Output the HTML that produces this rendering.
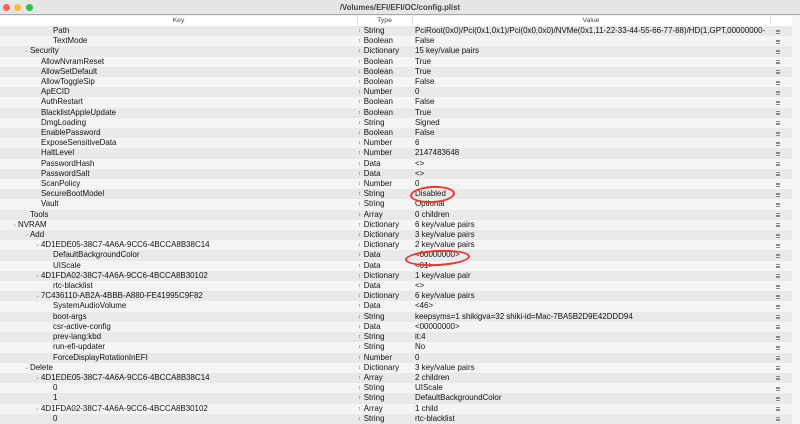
<!DOCTYPE html>
<html><head><style>
*{margin:0;padding:0;box-sizing:border-box}
body{width:800px;height:424px;overflow:hidden;background:#f0f0f0;font-family:"Liberation Sans",sans-serif;font-size:7.95px;color:#111;position:relative}
.tb{position:absolute;left:0;top:0;width:800px;height:15px;background:#e6e6e6;border-bottom:1px solid #a8a8a8}
.tb .t{position:absolute;left:0;width:800px;top:3px;text-align:center;font-weight:bold;color:#444;font-size:7.8px}
.d{position:absolute;top:3.5px;width:7px;height:7px;border-radius:50%}
.hd{position:absolute;top:16px;left:0;width:792px;height:10px;background:#fff;color:#444;font-size:6.8px}
.hd span{position:absolute;top:1px;text-align:center}
.hd i{position:absolute;top:1px;width:1px;height:8px;background:#ddd}
.rows{position:absolute;top:26px;left:0;width:792px}
.r{height:10.21px;position:relative;line-height:10.2px;white-space:nowrap}
.r:nth-child(odd){background:#e9e9e9}
.r:nth-child(even){background:#f4f4f4}
.k{position:absolute;top:0}
.ty{position:absolute;left:358px;top:0}
.ty:before{content:"\2195";font-size:5.5px;color:#666;margin-right:3px;vertical-align:1px}
.v{position:absolute;left:415px;top:0}
.m{position:absolute;left:776px;top:3.5px;width:4px;height:4px;border-top:1px solid #888;border-bottom:1px solid #888}
.m:after{content:"";position:absolute;left:0;top:0.5px;width:4px;height:1px;background:#888}
.a{position:absolute;top:0;color:#999;font-size:6px}
.sb{position:absolute;left:792px;top:16px;width:8px;height:408px;background:#f7f7f7}
.th{position:absolute;left:795px;top:294px;width:3px;height:24px;border-radius:2px;background:#c2c2c2}
.ov{position:absolute;border:2px solid #e8382a;border-radius:50%}
</style></head><body>
<div class="tb"><div class="d" style="left:3px;background:#fe5f57"></div><div class="d" style="left:14px;background:#febc2e"></div><div class="d" style="left:26px;background:#28c840"></div><div class="t">/Volumes/EFI/EFI/OC/config.plist</div></div>
<div class="hd"><span style="left:0;width:357px">Key</span><i style="left:357px"></i><span style="left:357px;width:55px">Type</span><i style="left:412px"></i><span style="left:412px;width:358px">Value</span><i style="left:770px"></i></div>
<div class="rows">
<div class="r"><span class="k" style="left:53px">Path</span><span class="ty">String</span><span class="v">PciRoot(0x0)/Pci(0x1,0x1)/Pci(0x0,0x0)/NVMe(0x1,11-22-33-44-55-66-77-88)/HD(1,GPT,00000000-</span><i class="m"></i></div>
<div class="r"><span class="k" style="left:53px">TextMode</span><span class="ty">Boolean</span><span class="v">False</span><i class="m"></i></div>
<div class="r"><span class="a" style="left:24px">&#8964;</span><span class="k" style="left:30px">Security</span><span class="ty">Dictionary</span><span class="v">15 key/value pairs</span><i class="m"></i></div>
<div class="r"><span class="k" style="left:41px">AllowNvramReset</span><span class="ty">Boolean</span><span class="v">True</span><i class="m"></i></div>
<div class="r"><span class="k" style="left:41px">AllowSetDefault</span><span class="ty">Boolean</span><span class="v">True</span><i class="m"></i></div>
<div class="r"><span class="k" style="left:41px">AllowToggleSip</span><span class="ty">Boolean</span><span class="v">False</span><i class="m"></i></div>
<div class="r"><span class="k" style="left:41px">ApECID</span><span class="ty">Number</span><span class="v">0</span><i class="m"></i></div>
<div class="r"><span class="k" style="left:41px">AuthRestart</span><span class="ty">Boolean</span><span class="v">False</span><i class="m"></i></div>
<div class="r"><span class="k" style="left:41px">BlacklistAppleUpdate</span><span class="ty">Boolean</span><span class="v">True</span><i class="m"></i></div>
<div class="r"><span class="k" style="left:41px">DmgLoading</span><span class="ty">String</span><span class="v">Signed</span><i class="m"></i></div>
<div class="r"><span class="k" style="left:41px">EnablePassword</span><span class="ty">Boolean</span><span class="v">False</span><i class="m"></i></div>
<div class="r"><span class="k" style="left:41px">ExposeSensitiveData</span><span class="ty">Number</span><span class="v">6</span><i class="m"></i></div>
<div class="r"><span class="k" style="left:41px">HaltLevel</span><span class="ty">Number</span><span class="v">2147483648</span><i class="m"></i></div>
<div class="r"><span class="k" style="left:41px">PasswordHash</span><span class="ty">Data</span><span class="v">&lt;&gt;</span><i class="m"></i></div>
<div class="r"><span class="k" style="left:41px">PasswordSalt</span><span class="ty">Data</span><span class="v">&lt;&gt;</span><i class="m"></i></div>
<div class="r"><span class="k" style="left:41px">ScanPolicy</span><span class="ty">Number</span><span class="v">0</span><i class="m"></i></div>
<div class="r"><span class="k" style="left:41px">SecureBootModel</span><span class="ty">String</span><span class="v">Disabled</span><i class="m"></i></div>
<div class="r"><span class="k" style="left:41px">Vault</span><span class="ty">String</span><span class="v">Optional</span><i class="m"></i></div>
<div class="r"><span class="k" style="left:30px">Tools</span><span class="ty">Array</span><span class="v">0 children</span><i class="m"></i></div>
<div class="r"><span class="a" style="left:12px">&#8964;</span><span class="k" style="left:18px">NVRAM</span><span class="ty">Dictionary</span><span class="v">6 key/value pairs</span><i class="m"></i></div>
<div class="r"><span class="a" style="left:24px">&#8964;</span><span class="k" style="left:30px">Add</span><span class="ty">Dictionary</span><span class="v">3 key/value pairs</span><i class="m"></i></div>
<div class="r"><span class="a" style="left:35px">&#8964;</span><span class="k" style="left:41px">4D1EDE05-38C7-4A6A-9CC6-4BCCA8B38C14</span><span class="ty">Dictionary</span><span class="v">2 key/value pairs</span><i class="m"></i></div>
<div class="r"><span class="k" style="left:53px">DefaultBackgroundColor</span><span class="ty">Data</span><span class="v">&lt;00000000&gt;</span><i class="m"></i></div>
<div class="r"><span class="k" style="left:53px">UIScale</span><span class="ty">Data</span><span class="v">&lt;01&gt;</span><i class="m"></i></div>
<div class="r"><span class="a" style="left:35px">&#8964;</span><span class="k" style="left:41px">4D1FDA02-38C7-4A6A-9CC6-4BCCA8B30102</span><span class="ty">Dictionary</span><span class="v">1 key/value pair</span><i class="m"></i></div>
<div class="r"><span class="k" style="left:53px">rtc-blacklist</span><span class="ty">Data</span><span class="v">&lt;&gt;</span><i class="m"></i></div>
<div class="r"><span class="a" style="left:35px">&#8964;</span><span class="k" style="left:41px">7C436110-AB2A-4BBB-A880-FE41995C9F82</span><span class="ty">Dictionary</span><span class="v">6 key/value pairs</span><i class="m"></i></div>
<div class="r"><span class="k" style="left:53px">SystemAudioVolume</span><span class="ty">Data</span><span class="v">&lt;46&gt;</span><i class="m"></i></div>
<div class="r"><span class="k" style="left:53px">boot-args</span><span class="ty">String</span><span class="v">keepsyms=1 shikigva=32 shiki-id=Mac-7BA5B2D9E42DDD94</span><i class="m"></i></div>
<div class="r"><span class="k" style="left:53px">csr-active-config</span><span class="ty">Data</span><span class="v">&lt;00000000&gt;</span><i class="m"></i></div>
<div class="r"><span class="k" style="left:53px">prev-lang:kbd</span><span class="ty">String</span><span class="v">it:4</span><i class="m"></i></div>
<div class="r"><span class="k" style="left:53px">run-efi-updater</span><span class="ty">String</span><span class="v">No</span><i class="m"></i></div>
<div class="r"><span class="k" style="left:53px">ForceDisplayRotationInEFI</span><span class="ty">Number</span><span class="v">0</span><i class="m"></i></div>
<div class="r"><span class="a" style="left:24px">&#8964;</span><span class="k" style="left:30px">Delete</span><span class="ty">Dictionary</span><span class="v">3 key/value pairs</span><i class="m"></i></div>
<div class="r"><span class="a" style="left:35px">&#8964;</span><span class="k" style="left:41px">4D1EDE05-38C7-4A6A-9CC6-4BCCA8B38C14</span><span class="ty">Array</span><span class="v">2 children</span><i class="m"></i></div>
<div class="r"><span class="k" style="left:53px">0</span><span class="ty">String</span><span class="v">UIScale</span><i class="m"></i></div>
<div class="r"><span class="k" style="left:53px">1</span><span class="ty">String</span><span class="v">DefaultBackgroundColor</span><i class="m"></i></div>
<div class="r"><span class="a" style="left:35px">&#8964;</span><span class="k" style="left:41px">4D1FDA02-38C7-4A6A-9CC6-4BCCA8B30102</span><span class="ty">Array</span><span class="v">1 child</span><i class="m"></i></div>
<div class="r"><span class="k" style="left:53px">0</span><span class="ty">String</span><span class="v">rtc-blacklist</span><i class="m"></i></div>
</div>
<div class="sb"><div class="th"></div></div>
<div class="ov" style="left:410px;top:186px;width:45px;height:17px;transform:rotate(-3deg)"></div>
<div class="ov" style="left:405px;top:250px;width:65px;height:16px;transform:rotate(-3deg)"></div>
</body></html>
